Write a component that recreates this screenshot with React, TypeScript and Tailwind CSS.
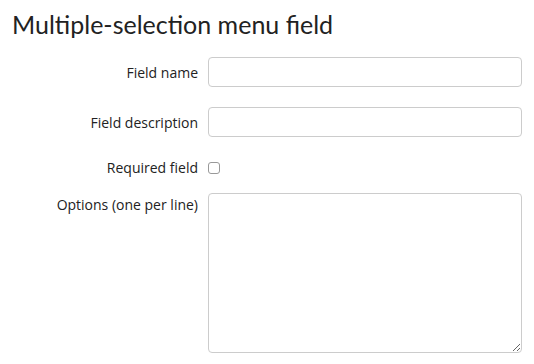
export default function App() {
  return (
    <div className="min-h-[364px] w-[534px] bg-white">
      <h1 className="pl-[12px] pt-[7px] font-['Lato',sans-serif] text-[25px] leading-[34px] text-[#222]">
        Multiple-selection menu field
      </h1>

      <form className="mt-[16px] grid grid-cols-[198px_314px] gap-x-[10px] font-['Open_Sans',sans-serif] text-[14px] text-[#222]">
        <label className="flex h-[30px] items-center justify-end">Field name</label>
        <input
          type="text"
          className="h-[30px] rounded-[4px] border border-[#ccc] bg-white px-2"
        />

        <label className="mt-[20px] flex h-[30px] items-center justify-end">
          Field description
        </label>
        <input
          type="text"
          className="mt-[20px] h-[30px] rounded-[4px] border border-[#ccc] bg-white px-2"
        />

        <label className="mt-[20px] flex h-[20px] items-center justify-end">
          Required field
        </label>
        <div className="mt-[20px] flex h-[20px] items-center">
          <input
            type="checkbox"
            className="mt-[1px] h-[12px] w-[12px] appearance-none rounded-[3px] border border-[#999] bg-white"
          />
        </div>

        <label className="mt-[16px] flex justify-end pt-[2px] leading-[20px]">
          Options (one per line)
        </label>
        <textarea className="mt-[16px] h-[160px] rounded-[4px] border border-[#ccc] bg-white px-2" />
      </form>
    </div>
  );
}
